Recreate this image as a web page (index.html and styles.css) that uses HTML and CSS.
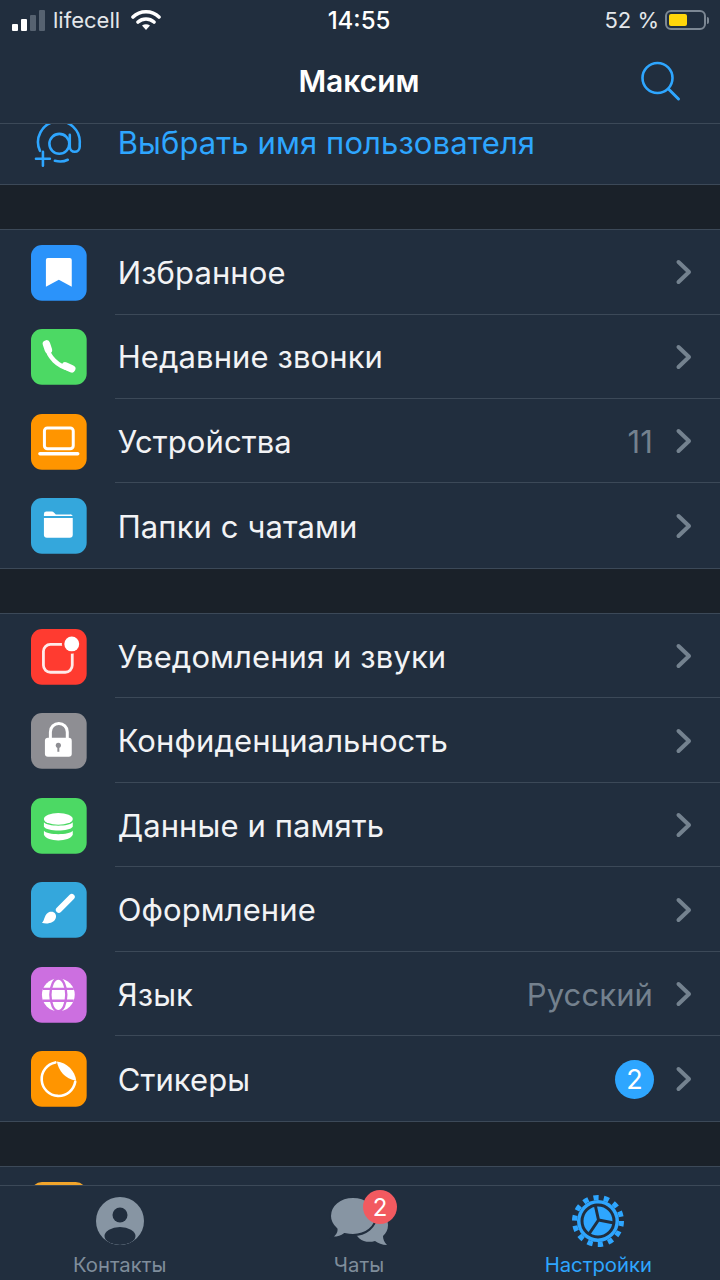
FILE: index.html
```html
<!DOCTYPE html>
<html lang="ru">
<head>
  <meta charset="UTF-8">
  <meta name="viewport" content="width=device-width, initial-scale=1">
  <title>Настройки</title>
  <link rel="stylesheet" href="styles.css">
</head>
<body>
  <svg class="defs" width="0" height="0">
    <symbol id="chevron" viewBox="0 0 18 26">
      <path d="M3.5 3 L14 13 L3.5 23" fill="none" stroke="#74828f" stroke-width="4" stroke-linecap="round" stroke-linejoin="round"/>
    </symbol>
  </svg>

  <div class="app">
    <header class="top">
      <div class="status">
        <div class="status-left">
          <div class="signal"><i class="b1"></i><i class="b2"></i><i class="b3"></i><i class="b4"></i></div>
          <span>lifecell</span>
          <svg class="wifi" viewBox="0 0 30 22" width="30" height="22">
            <path d="M2 8 C9 1 21 1 28 8 M7 13 C11.500 9 18.500 9 23 13" fill="none" stroke="#fff" stroke-width="3.600" stroke-linecap="round"/>
            <path d="M11 16.500 C13.500 14.800 16.500 14.800 19 16.500 L15 21 Z" fill="#fff"/>
          </svg>
        </div>
        <div class="clock">14:55</div>
        <div class="status-right">
          <span>52 %</span>
          <div class="battery"><div class="battery-fill"></div></div>
          <div class="battery-cap"></div>
        </div>
      </div>
      <div class="nav">
        <div class="nav-title">Максим</div>
        <svg class="search" viewBox="0 0 44 44" width="44" height="44">
          <circle cx="18.500" cy="18" r="15" fill="none" stroke="#2ea6ff" stroke-width="2.600"/>
          <path d="M29.500 29 L39.500 39" stroke="#2ea6ff" stroke-width="3" stroke-linecap="round"/>
        </svg>
      </div>
    </header>

    <main class="list">
      <div class="scroll">
        <section class="group group-first">
          <div class="row">
            <svg class="icon" viewBox="0 0 56 56">
              <path d="M39 20 V32 a5 5 0 0 0 10 0 V29 A21 21 0 1 0 9 36" fill="none" stroke="#2ea6ff" stroke-width="2.600" stroke-linecap="round"/>
              <circle cx="28.500" cy="29" r="10" fill="none" stroke="#2ea6ff" stroke-width="2.600"/>
              <path d="M5 44 H19 M12 37 V51 M24 46 C28 47 33 47 37 45" fill="none" stroke="#2ea6ff" stroke-width="2.600" stroke-linecap="round"/>
            </svg>
            <div class="row-body"><span class="label label-link">Выбрать имя пользователя</span></div>
          </div>
        </section>

        <section class="group">
          <div class="row">
            <svg class="icon" viewBox="0 0 56 56">
              <rect width="56" height="56" rx="11" fill="#2b93fa"/>
              <path d="M17 13 H39 A2 2 0 0 1 41 15 V42 L28 35 L15 42 V15 A2 2 0 0 1 17 13 Z" fill="#fff"/>
            </svg>
            <div class="row-body">
              <span class="label">Избранное</span>
              <svg class="chevron"><use href="#chevron"/></svg>
            </div>
          </div>
          <div class="row">
            <svg class="icon" viewBox="0 0 56 56">
              <rect width="56" height="56" rx="11" fill="#4cd964"/>
              <path d="M16 17 C17 28 27 38 39 40" fill="none" stroke="#fff" stroke-width="4.500"/>
              <path d="M15.500 15 L17.500 21 M34.500 37 L41 40" fill="none" stroke="#fff" stroke-width="7.500" stroke-linecap="round"/>
            </svg>
            <div class="row-body">
              <span class="label">Недавние звонки</span>
              <svg class="chevron"><use href="#chevron"/></svg>
            </div>
          </div>
          <div class="row">
            <svg class="icon" viewBox="0 0 56 56">
              <rect width="56" height="56" rx="11" fill="#ff9500"/>
              <rect x="13.500" y="14" width="29" height="21" rx="3" fill="none" stroke="#fff" stroke-width="3"/>
              <path d="M9 40 H47" stroke="#fff" stroke-width="3.500" stroke-linecap="round"/>
            </svg>
            <div class="row-body">
              <span class="label">Устройства</span>
              <span class="value">11</span>
              <svg class="chevron"><use href="#chevron"/></svg>
            </div>
          </div>
          <div class="row">
            <svg class="icon" viewBox="0 0 56 56">
              <rect width="56" height="56" rx="11" fill="#34a7dc"/>
              <path d="M13 18 V16 A2.500 2.500 0 0 1 15.500 13.500 H21 A3 3 0 0 1 23 14.500 L25 16.500 H39 A3 3 0 0 1 42 18 Z" fill="#fff"/>
              <path d="M13 20 H42 V37 A3 3 0 0 1 39 40 H16 A3 3 0 0 1 13 37 Z" fill="#fff"/>
            </svg>
            <div class="row-body">
              <span class="label">Папки с чатами</span>
              <svg class="chevron"><use href="#chevron"/></svg>
            </div>
          </div>
        </section>

        <section class="group">
          <div class="row">
            <svg class="icon" viewBox="0 0 56 56">
              <rect width="56" height="56" rx="11" fill="#ff3b30"/>
              <rect x="12.500" y="15.500" width="29" height="28" rx="7" fill="none" stroke="#fff" stroke-width="2.800" opacity=".9"/>
              <circle cx="41" cy="15" r="10" fill="#ff3b30"/>
              <circle cx="41" cy="15" r="7.500" fill="#fff"/>
            </svg>
            <div class="row-body">
              <span class="label">Уведомления и звуки</span>
              <svg class="chevron"><use href="#chevron"/></svg>
            </div>
          </div>
          <div class="row">
            <svg class="icon" viewBox="0 0 56 56">
              <rect width="56" height="56" rx="11" fill="#8e8e93"/>
              <path d="M19.500 26 V19 A8.500 8.500 0 0 1 36.500 19 V26" fill="none" stroke="#fff" stroke-width="3"/>
              <rect x="14" y="25" width="27" height="19" rx="3" fill="#fff"/>
              <circle cx="27.500" cy="32.500" r="2.600" fill="#8e8e93"/>
              <path d="M27.500 33 V39" stroke="#8e8e93" stroke-width="2"/>
            </svg>
            <div class="row-body">
              <span class="label">Конфиденциальность</span>
              <svg class="chevron"><use href="#chevron"/></svg>
            </div>
          </div>
          <div class="row">
            <svg class="icon" viewBox="0 0 56 56">
              <rect width="56" height="56" rx="11" fill="#4cd964"/>
              <ellipse cx="27.500" cy="21" rx="14.500" ry="6" fill="#fff"/>
              <path d="M13 24.500 C16 29 39 29 42 24.500 V29 C39 34 16 34 13 29 Z" fill="#fff"/>
              <path d="M13 33 C16 37.500 39 37.500 42 33 V37 C39 44.500 16 44.500 13 37 Z" fill="#fff"/>
            </svg>
            <div class="row-body">
              <span class="label">Данные и память</span>
              <svg class="chevron"><use href="#chevron"/></svg>
            </div>
          </div>
          <div class="row">
            <svg class="icon" viewBox="0 0 56 56">
              <rect width="56" height="56" rx="11" fill="#34a7dc"/>
              <path d="M41 15 L28 28" stroke="#fff" stroke-width="6" stroke-linecap="round"/>
              <path d="M19 30 C23 29 26 32 25 36 C24 41 16 43 11 41 C14 39 13 32 19 30 Z" fill="#fff"/>
            </svg>
            <div class="row-body">
              <span class="label">Оформление</span>
              <svg class="chevron"><use href="#chevron"/></svg>
            </div>
          </div>
          <div class="row">
            <svg class="icon" viewBox="0 0 56 56">
              <rect width="56" height="56" rx="11" fill="#cc6fe0"/>
              <circle cx="27.500" cy="28" r="16.500" fill="#fff"/>
              <ellipse cx="27.500" cy="28" rx="8" ry="16.500" fill="none" stroke="#cc6fe0" stroke-width="2.400"/>
              <path d="M12 22 H43 M12 34 H43" stroke="#cc6fe0" stroke-width="2.400"/>
            </svg>
            <div class="row-body">
              <span class="label">Язык</span>
              <span class="value">Русский</span>
              <svg class="chevron"><use href="#chevron"/></svg>
            </div>
          </div>
          <div class="row">
            <svg class="icon" viewBox="0 0 56 56">
              <rect width="56" height="56" rx="11" fill="#ff9500"/>
              <path d="M24.500 11.500 A17 17 0 1 0 44.500 31" fill="none" stroke="#fff" stroke-width="2.600" stroke-linecap="round"/>
              <path d="M26 10.500 C28 20 34 28 45.500 30 C44.500 20 36 11.500 26 10.500 Z" fill="#fff"/>
            </svg>
            <div class="row-body">
              <span class="label">Стикеры</span>
              <span class="count">2</span>
              <svg class="chevron"><use href="#chevron"/></svg>
            </div>
          </div>
        </section>

        <section class="group">
          <div class="row">
            <svg class="icon" viewBox="0 0 56 56">
              <rect width="56" height="56" rx="11" fill="#f2a52b"/>
            </svg>
            <div class="row-body"></div>
          </div>
        </section>
      </div>
    </main>

    <nav class="tabs">
      <div class="tab">
        <svg class="tab-icon" viewBox="0 0 60 52" width="60" height="52">
          <defs><clipPath id="face"><circle cx="30" cy="26" r="24"/></clipPath></defs>
          <circle cx="30" cy="26" r="24" fill="#8795a3"/>
          <circle cx="30" cy="20" r="7.500" fill="#212e3e"/>
          <ellipse cx="30" cy="41" rx="15.500" ry="9" fill="#212e3e" clip-path="url(#face)"/>
        </svg>
        <span>Контакты</span>
      </div>
      <div class="tab">
        <div class="tab-chats">
          <svg class="tab-icon" viewBox="0 0 60 52" width="60" height="52">
            <path d="M42 14 C52 14 59 21 59 30 C59 35 57 38 54 41 C54 44 55 47 58 50 C53 50 49 48 46 46 C36 49 27 44 25 34 Z" fill="#8795a3"/>
            <path d="M24 2 C37 2 47 10 47 21 C47 32 37 40 24 40 C21 40 18 39.500 15.500 39 C13 41 8 43 2 42.500 C6 40 8 37 7.500 34 C3 30 1 26 1 21 C1 10 11 2 24 2 Z" fill="#8795a3" stroke="#212e3e" stroke-width="2"/>
          </svg>
          <span class="tab-badge">2</span>
        </div>
        <span>Чаты</span>
      </div>
      <div class="tab tab-active">
        <svg class="tab-icon" viewBox="0 0 60 52" width="60" height="52">
          <circle cx="30" cy="26" r="23.500" fill="none" stroke="#2ea6ff" stroke-width="5" stroke-dasharray="5.270 5.270"/>
          <circle cx="30" cy="26" r="21" fill="#2ea6ff"/>
          <circle cx="30" cy="26" r="16" fill="#2ea6ff" stroke="#212e3e" stroke-width="3"/>
          <path d="M30.500 25 L27 9 M30.500 25 L46 28 M30.500 25 L21 39" fill="none" stroke="#212e3e" stroke-width="3"/>
        </svg>
        <span>Настройки</span>
      </div>
    </nav>
  </div>
</body>
</html>
```

FILE: styles.css
```css
html, body {
  margin: 0;
  padding: 0;
  background: #212e3e;
}
body {
  font-family: Inter, "Noto Sans", sans-serif;
  color: #fff;
}
.defs {
  position: absolute;
}
.app {
  width: 720px;
  height: 1280px;
  display: flex;
  flex-direction: column;
  overflow: hidden;
}

/* status bar + title */
.top {
  height: 124px;
  box-sizing: border-box;
  border-bottom: 1px solid #3c4958;
  flex: none;
}
.status {
  height: 40px;
  display: grid;
  grid-template-columns: 1fr auto 1fr;
  align-items: center;
  font-size: 22px;
}
.status-left {
  display: flex;
  align-items: center;
  padding-left: 12px;
  gap: 8px;
  color: #e4e7ea;
}
.wifi {
  margin-left: 3px;
}
.signal {
  display: flex;
  align-items: flex-end;
  gap: 3px;
  height: 21px;
}
.signal i {
  width: 6px;
  border-radius: 1px;
  background: #fff;
}
.signal .b1 { height: 7px; }
.signal .b2 { height: 12px; }
.signal .b3 { height: 16px; background: #566270; }
.signal .b4 { height: 21px; background: #566270; }
.clock {
  font-size: 24px;
  font-weight: 500;
  margin-right: 2px;
}
.status-right {
  display: flex;
  align-items: center;
  justify-content: flex-end;
  padding-right: 11px;
  color: #e4e7ea;
}
.battery {
  width: 41px;
  height: 20px;
  box-sizing: border-box;
  border: 2px solid #7c8793;
  border-radius: 6px;
  margin-left: 6px;
  padding: 2px;
}
.battery-fill {
  width: 18px;
  height: 100%;
  border-radius: 2px;
  background: #ffd60a;
}
.battery-cap {
  width: 2px;
  height: 7px;
  margin-left: 1px;
  border-radius: 0 2px 2px 0;
  background: #7c8793;
}
.nav {
  position: relative;
  height: 83px;
  display: flex;
  align-items: center;
  justify-content: center;
}
.nav-title {
  font-size: 30px;
  font-weight: 600;
  margin: -1px 2px 0 0;
}
.search {
  position: absolute;
  right: 37px;
  top: 20px;
}

/* settings list */
.list {
  flex: 1;
  min-height: 0;
  overflow: hidden;
  background: #1a2129;
}
.scroll {
  margin-top: -24.4px;
}
.group {
  background: #212e3e;
  border-top: 1px solid #3c4958;
  border-bottom: 1px solid #3c4958;
  margin-bottom: 44px;
}
.group-first {
  border-top: 0;
}
.row {
  display: flex;
  height: 84.48px;
  padding: 1px 0 0 31px;
  align-items: center;
  box-sizing: border-box;
}
.icon {
  width: 55.68px;
  height: 55.68px;
  flex: none;
  overflow: visible;
}
.row-body {
  flex: 1;
  align-self: stretch;
  margin-left: 28px;
  padding: 0 27px 0 3px;
  display: flex;
  align-items: center;
  box-sizing: border-box;
  border-bottom: 1px solid #3c4958;
}
.row:last-child .row-body {
  border-bottom: 0;
}
.label {
  flex: 1;
  font-size: 31px;
  letter-spacing: .1px;
  color: #f2f3f5;
}
.label-link {
  color: #2ea6ff;
}
.value {
  font-size: 31px;
  letter-spacing: .1px;
  color: #74818e;
  margin-right: 22px;
}
.count {
  width: 39px;
  height: 39px;
  border-radius: 50%;
  background: #2ea6ff;
  color: #fff;
  font-size: 27px;
  display: flex;
  align-items: center;
  justify-content: center;
  margin-right: 21px;
}
.chevron {
  width: 18px;
  height: 26px;
  flex: none;
}

/* tab bar */
.tabs {
  height: 95px;
  flex: none;
  box-sizing: border-box;
  border-top: 1px solid #3c4958;
  background: #212e3e;
  display: flex;
  padding-right: 2px;
}
.tab {
  flex: 1;
  display: flex;
  flex-direction: column;
  align-items: center;
  padding-top: 9px;
  font-size: 20.3px;
  color: #7f8d9b;
}
.tab-icon {
  display: block;
}
.tab > span {
  margin-top: 6px;
  line-height: 24px;
}
.tab-chats {
  position: relative;
}
.tab-badge {
  position: absolute;
  left: 34px;
  top: -5px;
  width: 34px;
  height: 34px;
  border-radius: 50%;
  background: #f25a60;
  color: #fff;
  font-size: 24px;
  display: flex;
  align-items: center;
  justify-content: center;
}
.tab-active {
  color: #2ea6ff;
}
```
